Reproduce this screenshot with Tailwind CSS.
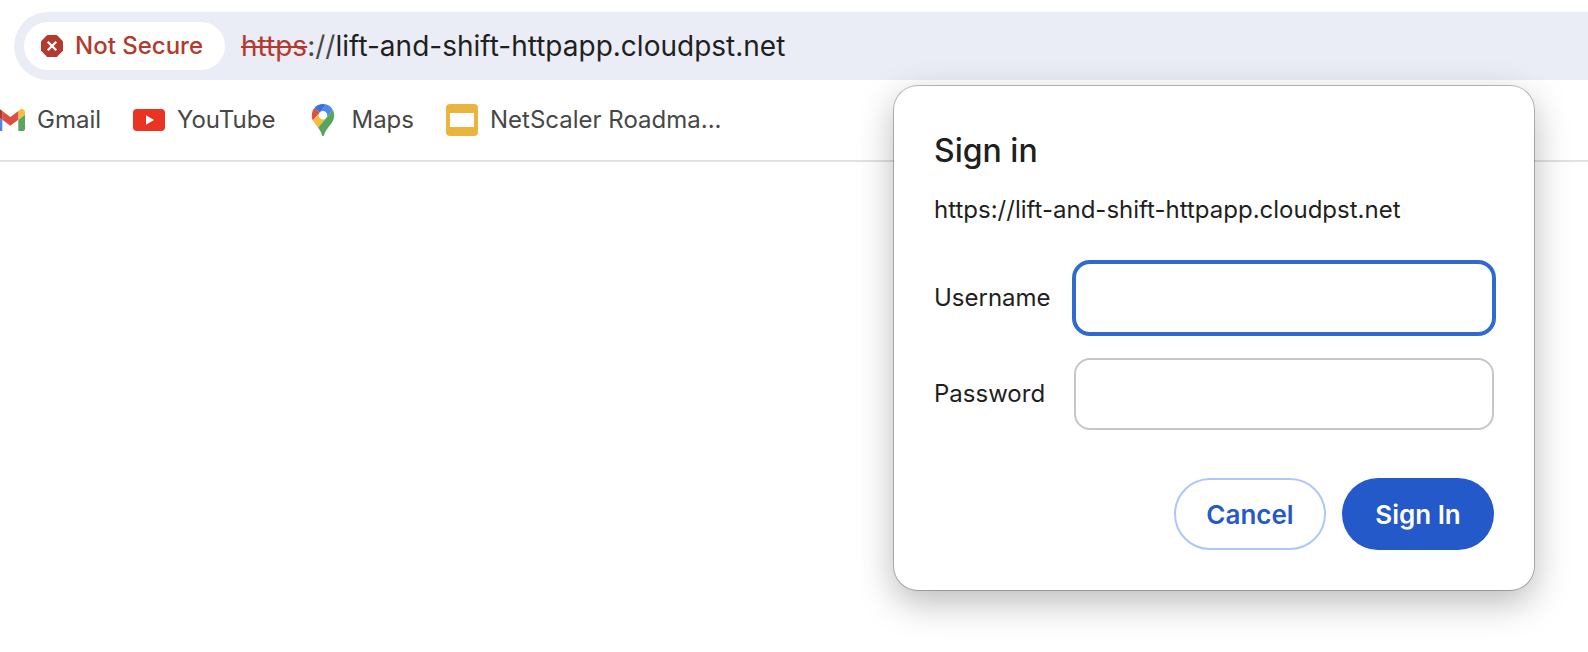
<!DOCTYPE html>
<html lang="en">
<head>
<meta charset="utf-8">
<meta name="viewport" content="width=device-width, initial-scale=1">
<title>Sign in</title>
<script src="https://cdn.jsdelivr.net/npm/@tailwindcss/browser@4"></script>
</head>
<body class="relative min-h-screen overflow-x-hidden bg-white font-['Inter',sans-serif] text-[#1f1f1f]">
<header class="border-b-2 border-[#e1e1e1] pt-3">
  <div class="ml-3.5 flex h-[68px] items-center gap-4 rounded-l-full bg-[#ebedf6] pl-2.5">
    <button type="button" class="flex h-12 items-center gap-3 rounded-full bg-white pr-[22px] pl-[17px] text-2xl font-medium text-[#b23a2e]">
      <svg class="size-[22px]" viewBox="0 0 22 22" aria-hidden="true">
        <path d="M6.200 0h9.600L22 6.200v9.600L15.800 22H6.200L0 15.800V6.200z" fill="#b23a2e"/>
        <path d="M6.700 6.700l8.600 8.600M15.300 6.700l-8.600 8.600" stroke="#fff" stroke-width="2.200"/>
      </svg>
      Not Secure
    </button>
    <p class="text-[28px] leading-8 whitespace-nowrap"><span class="text-[#b23a2e] line-through decoration-2">https</span><span class="text-[#474747]">://</span>lift-and-shift-httpapp.cloudpst.net</p>
  </div>
  <nav class="flex h-20 items-center gap-8 text-2xl text-[#474747]" aria-label="Bookmarks">
    <a href="#" class="flex items-center gap-3">
      <svg class="h-[22px] w-[25px]" viewBox="65 42 75 66" aria-hidden="true">
        <path fill="#4f86ec" d="M58 108h14V74L52 59v43c0 3.320 2.690 6 6 6"/>
        <path fill="#58a65c" d="M120 108h14c3.320 0 6-2.690 6-6V59l-20 15"/>
        <path fill="#f1be42" d="M120 48v26l20-15v-8c0-7.420-8.470-11.650-14.400-7.200"/>
        <path fill="#db5040" d="M72 74V48l24 18 24-18v26L96 92"/>
        <path fill="#b93426" d="M52 51v8l20 15V48l-5.600-4.200c-5.940-4.450-14.400-.22-14.400 7.200"/>
      </svg>
      Gmail
    </a>
    <a href="#" class="flex items-center gap-3">
      <svg class="h-[22px] w-8" viewBox="0 0 32 22" aria-hidden="true">
        <rect width="32" height="22" rx="4" fill="#ea3323"/>
        <path d="M13 6.300v9.400l8-4.700z" fill="#fff"/>
      </svg>
      YouTube
    </a>
    <a href="#" class="flex items-center gap-3">
      <svg class="size-8" viewBox="-20 0 132.300 132.300" aria-hidden="true">
        <path fill="#3472e0" d="M60.200 2.200C55.800.8 51 0 46.100 0 32 0 19.300 6.400 10.800 16.500l21.800 18.300L60.200 2.200z"/>
        <path fill="#db5040" d="M10.800 16.500C4.100 24.500 0 34.900 0 46.100c0 8.700 1.700 15.700 4.600 22l28-33.300-21.800-18.300z"/>
        <path fill="#5186ec" d="M46.200 28.500c9.800 0 17.700 7.900 17.700 17.700 0 4.300-1.600 8.300-4.200 11.400 0 0 13.900-16.600 27.500-32.700-5.600-10.800-15.300-19-27-22.700L32.600 34.800c3.300-3.800 8.100-6.300 13.600-6.300"/>
        <path fill="#f1be42" d="M46.200 63.800c-9.800 0-17.700-7.900-17.700-17.700 0-4.300 1.500-8.300 4.100-11.300l-28 33.300c4.800 10.600 12.800 19.200 21 29.900l34.100-40.500c-3.300 3.900-8.100 6.300-13.500 6.300"/>
        <path fill="#58a65c" d="M59.100 109.200c15.400-24.100 33.300-35 33.300-63 0-7.700-1.900-14.900-5.200-21.300L25.600 98c2.600 3.400 5.300 7.300 7.900 11.300 9.400 14.500 6.800 23.100 12.800 23.100s3.400-8.700 12.800-23.200"/>
      </svg>
      Maps
    </a>
    <a href="#" class="flex items-center gap-3">
      <svg class="size-8" viewBox="0 0 32 32" aria-hidden="true">
        <path fill-rule="evenodd" d="M4 0h24a4 4 0 0 1 4 4v24a4 4 0 0 1-4 4H4a4 4 0 0 1-4-4V4a4 4 0 0 1 4-4zM4 9v14h24V9z" fill="#e9b53f"/>
      </svg>
      NetScaler Roadma...
    </a>
  </nav>
</header>

<div role="dialog" aria-labelledby="dialog-title" class="absolute top-[86px] right-[54px] w-[640px] rounded-3xl bg-white px-10 pt-[45px] pb-10 shadow-[0_0_0_1px_rgba(0,0,0,0.25),0_12px_36px_rgba(0,0,0,0.28)]">
  <h1 id="dialog-title" class="text-[32px] leading-10 font-medium">Sign in</h1>
  <p class="mt-[23px] text-2xl leading-8">https://lift-and-shift-httpapp.cloudpst.net</p>
  <form class="mt-9">
    <div class="grid grid-cols-[116px_1fr] items-center gap-6">
      <label for="username" class="text-2xl">Username</label>
      <input id="username" type="text" class="-m-0.5 h-[76px] w-[calc(100%+4px)] rounded-[18px] border-4 border-[#316acd] px-5 text-2xl outline-none">
      <label for="password" class="text-2xl">Password</label>
      <input id="password" type="password" class="h-[72px] w-full rounded-2xl border-2 border-[#c6c6c6] px-5 text-2xl outline-none">
    </div>
    <div class="mt-12 flex justify-end gap-4 text-[26px] font-semibold">
      <button type="button" class="h-[72px] w-[152px] rounded-full border-2 border-[#adc7f8] text-[#2459c9]">Cancel</button>
      <button type="submit" class="h-[72px] w-[152px] rounded-full bg-[#2459c9] text-white">Sign In</button>
    </div>
  </form>
</div>
</body>
</html>
